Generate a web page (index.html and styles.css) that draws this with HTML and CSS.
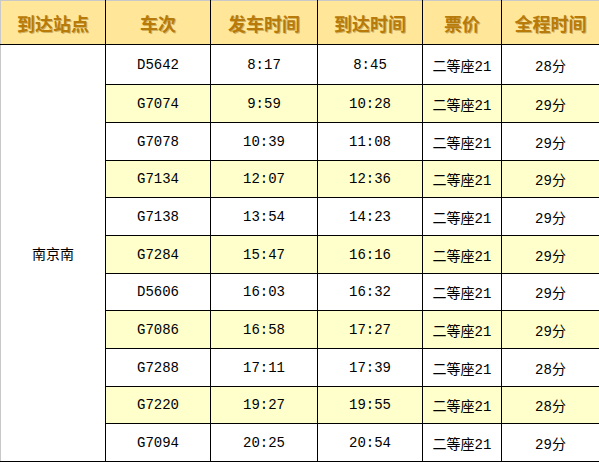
FILE: index.html
```html
<!DOCTYPE html>
<html lang="zh">
<head>
<meta charset="utf-8">
<link rel="stylesheet" href="styles.css">
</head>
<body>
<table class="tt">
  <colgroup>
    <col class="c1"><col class="c2"><col class="c3"><col class="c4"><col class="c5"><col class="c6">
  </colgroup>
  <thead>
    <tr class="hd">
      <th>到达站点</th><th>车次</th><th>发车时间</th><th>到达时间</th><th>票价</th><th>全程时间</th>
    </tr>
  </thead>
  <tbody>
    <tr class="r40"><td rowspan="11" class="stn">南京南</td><td>D5642</td><td>8:17</td><td>8:45</td><td>二等座21</td><td>28分</td></tr>
    <tr class="alt r38"><td>G7074</td><td>9:59</td><td>10:28</td><td>二等座21</td><td>29分</td></tr>
    <tr class="r38"><td>G7078</td><td>10:39</td><td>11:08</td><td>二等座21</td><td>29分</td></tr>
    <tr class="alt r37"><td>G7134</td><td>12:07</td><td>12:36</td><td>二等座21</td><td>29分</td></tr>
    <tr class="r38"><td>G7138</td><td>13:54</td><td>14:23</td><td>二等座21</td><td>29分</td></tr>
    <tr class="alt r38"><td>G7284</td><td>15:47</td><td>16:16</td><td>二等座21</td><td>29分</td></tr>
    <tr class="r37"><td>D5606</td><td>16:03</td><td>16:32</td><td>二等座21</td><td>29分</td></tr>
    <tr class="alt r38"><td>G7086</td><td>16:58</td><td>17:27</td><td>二等座21</td><td>29分</td></tr>
    <tr class="r38"><td>G7288</td><td>17:11</td><td>17:39</td><td>二等座21</td><td>28分</td></tr>
    <tr class="alt r37"><td>G7220</td><td>19:27</td><td>19:55</td><td>二等座21</td><td>28分</td></tr>
    <tr class="r38"><td>G7094</td><td>20:25</td><td>20:54</td><td>二等座21</td><td>29分</td></tr>
  </tbody>
</table>
</body>
</html>
```
FILE: styles.css
```css
html, body {
  margin: 0;
  padding: 0;
  background: #ffffff;
}
.tt {
  border-collapse: collapse;
  table-layout: fixed;
  width: 599px;
  font-family: "Liberation Mono", "Noto Sans CJK SC", monospace;
  font-size: 14px;
  color: #000;
  border-top: 1px solid #c8c8c8;
  border-left: 1px solid #c8c8c8;
}
.c1 { width: 105px; }
.c2 { width: 105px; }
.c3 { width: 107px; }
.c4 { width: 105px; }
.c5 { width: 79px; }
.c6 { width: 98px; }
.tt th, .tt td {
  padding: 0;
  text-align: center;
  vertical-align: middle;
  border: 1px solid #000;
}
.tt th {
  height: 43px;
  background: #ffe699;
  color: #b87a08;
  font-family: "Noto Sans CJK SC", sans-serif;
  font-weight: bold;
  font-size: 18px;
  text-shadow: 1px 1px 0 rgba(120, 80, 0, 0.35);
  border-top-color: #c8c8c8;
}
.tt th:first-child, .tt td.stn {
  border-left-color: #c8c8c8;
}
.tt td.stn {
  font-family: "Noto Sans CJK SC", sans-serif;
  background: #fff;
}
.r40 td { height: 39px; }
.r38 td { height: 37px; }
.r37 td { height: 36px; }
.alt td { background: #ffffcc; }
```
